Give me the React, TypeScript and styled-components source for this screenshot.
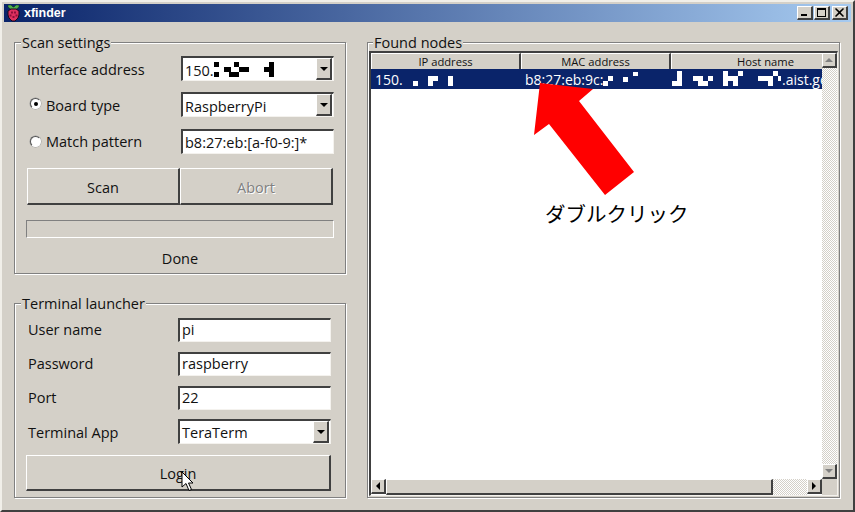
import React from "react";
import styled, { createGlobalStyle, css } from "styled-components";

const FACE = "#d4d0c8";
const FONT = `"Open Sans", "Noto Sans", sans-serif`;

const GlobalStyle = createGlobalStyle`
  html, body {
    margin: 0;
    padding: 0;
    background: ${FACE};
  }
  * {
    box-sizing: border-box;
  }
`;

const raised = css`
  background: ${FACE};
  border-style: solid;
  border-width: 1px 2px 2px 1px;
  border-color: #fff #404040 #404040 #fff;
`;

const sunken = css`
  border-style: solid;
  border-width: 2px 1px 1px 2px;
  border-color: #404040 #f4f2ee #f4f2ee #404040;
`;

// moves a text up or down inside its centred row
const nudge = css<{ $dy?: number }>`
  padding-top: ${(p) => Math.max((p.$dy ?? 0) * 2, 0)}px;
  padding-bottom: ${(p) => Math.max(-(p.$dy ?? 0) * 2, 0)}px;
`;

const Window = styled.div`
  position: relative;
  width: 855px;
  height: 512px;
  overflow: hidden;
  display: flex;
  flex-direction: column;
  padding: 2px 2px;
  background: ${FACE};
  border-style: solid;
  border-width: 2px;
  border-color: #f1efe9 #404040 #404040 #f1efe9;
  font-family: ${FONT};
  font-size: 14.5px;
  color: #111;
`;

const TitleBar = styled.div`
  height: 18px;
  flex: none;
  display: flex;
  align-items: center;
  padding: 0 3px 0 3px;
  background: linear-gradient(90deg, #0a246a, #a6caf0);
`;

const TitleText = styled.span`
  margin-left: 4px;
  font-family: "Liberation Sans", sans-serif;
  font-size: 12.5px;
  font-weight: bold;
  color: #fff;
`;

const TitleButtons = styled.div`
  margin-left: auto;
  display: flex;
  gap: 1px;
`;

const TitleButton = styled.div<{ $gap?: boolean }>`
  ${raised}
  width: 16px;
  height: 14px;
  margin-left: ${(p) => (p.$gap ? "1px" : "0")};
  display: flex;
  align-items: center;
  justify-content: center;
`;

const Content = styled.div`
  flex: 1;
  display: flex;
  gap: 21px;
  padding: 20px 11px 10px 10px;
`;

const LeftColumn = styled.div`
  width: 332px;
  flex: none;
  display: flex;
  flex-direction: column;
  gap: 29px;
`;

const GroupBox = styled.div<{ $height?: number }>`
  position: relative;
  flex: ${(p) => (p.$height ? "none" : "1")};
  height: ${(p) => (p.$height ? `${p.$height}px` : "auto")};
  display: flex;
  flex-direction: column;
  border: 1px solid #808080;
  box-shadow: inset 1px 1px 0 #fff, 1px 1px 0 #fff;
`;

const GroupTitle = styled.div<{ $left?: number }>`
  position: absolute;
  top: -9px;
  left: ${(p) => p.$left ?? 6}px;
  padding: 0 1px;
  line-height: 17px;
  background: ${FACE};
`;

const FormRow = styled.div<{ $h: number; $mt: number; $pl: number; $pr: number }>`
  height: ${(p) => p.$h}px;
  margin-top: ${(p) => p.$mt}px;
  padding: 0 ${(p) => p.$pr}px 0 ${(p) => p.$pl}px;
  display: flex;
  align-items: center;
  flex: none;
`;

const FieldLabel = styled.span<{ $dy?: number }>`
  ${nudge}
  flex: 1;
  white-space: nowrap;
`;

const RadioLabel = styled(FieldLabel)`
  display: flex;
  align-items: center;
  gap: 5px;
`;

const Radio = styled.span<{ $on?: boolean; $up?: number }>`
  width: 11px;
  height: 11px;
  flex: none;
  margin-bottom: ${(p) => p.$up ?? 0}px;
  display: flex;
  align-items: center;
  justify-content: center;
  border-radius: 50%;
  border: 1px solid;
  border-color: #555 #fff #fff #555;
  background: #fff;
  box-shadow: 0 0 0 0.5px #999;
  &::after {
    content: "";
    width: 4px;
    height: 4px;
    border-radius: 50%;
    background: ${(p) => (p.$on ? "#000" : "transparent")};
  }
`;

const Field = styled.div`
  ${sunken}
  width: 153px;
  height: 100%;
  flex: none;
  display: flex;
  align-items: center;
  padding-left: 2px;
  background: #fff;
  white-space: nowrap;
  overflow: hidden;
`;

const FieldValue = styled.span<{ $dy?: number }>`
  ${nudge}
  flex: 1;
  display: flex;
  align-items: center;
`;

const ComboButton = styled.span`
  ${raised}
  width: 16px;
  height: 100%;
  flex: none;
  margin-right: 1px;
  display: flex;
  align-items: center;
  justify-content: center;
`;

const DownArrow = styled.span<{ $muted?: boolean }>`
  width: 0;
  height: 0;
  border-left: 4px solid transparent;
  border-right: 4px solid transparent;
  border-top: 4px solid ${(p) => (p.$muted ? "#808080" : "#000")};
`;

const UpArrow = styled.span`
  width: 0;
  height: 0;
  border-left: 4px solid transparent;
  border-right: 4px solid transparent;
  border-bottom: 4px solid #808080;
`;

const LeftArrow = styled.span`
  width: 0;
  height: 0;
  border-top: 4px solid transparent;
  border-bottom: 4px solid transparent;
  border-right: 4px solid #000;
`;

const RightArrow = styled.span`
  width: 0;
  height: 0;
  border-top: 4px solid transparent;
  border-bottom: 4px solid transparent;
  border-left: 4px solid #000;
`;

const ButtonRow = styled.div`
  height: 37px;
  margin: 14px 12px 0 12px;
  display: flex;
  flex: none;
`;

const PushButton = styled.div<{ $disabled?: boolean }>`
  ${raised}
  flex: 1;
  display: flex;
  align-items: center;
  justify-content: center;
  padding-top: 2px;
  color: ${(p) => (p.$disabled ? "#808080" : "#111")};
  text-shadow: ${(p) => (p.$disabled ? "1px 1px 0 #fff" : "none")};
`;

const WideButton = styled(PushButton)`
  flex: none;
  height: 36px;
  margin: 11px 14px 0 11px;
`;

const Progress = styled.div`
  height: 18px;
  margin: 15px 11px 0 11px;
  flex: none;
  border: 1px solid;
  border-color: #808080 #fff #fff #808080;
`;

const Status = styled.div`
  margin-top: 11px;
  text-align: center;
  line-height: 20px;
`;

const RightPanel = styled(GroupBox)`
  flex: 1;
`;

const ListFrame = styled.div`
  ${sunken}
  flex: 1;
  margin: 8px 1px 1px 1px;
  display: grid;
  grid-template-columns: 1fr 15px;
  grid-template-rows: 1fr 16px;
  min-height: 0;
  background: #fff;
`;

const ListPane = styled.div`
  display: flex;
  flex-direction: column;
  overflow: hidden;
  min-width: 0;
`;

// the last column runs on under the scroll bar, as the list is wider than its pane
const HeaderRow = styled.div`
  display: grid;
  grid-template-columns: 150px 150px 190px;
  height: 16px;
  flex: none;
`;

const HeaderCell = styled.div`
  ${raised}
  display: flex;
  align-items: center;
  justify-content: center;
  font-size: 11.2px;
  white-space: nowrap;
`;

const NodeRow = styled.div`
  display: grid;
  grid-template-columns: 150px 150px 190px;
  height: 20px;
  flex: none;
  background: #0a246a;
  color: #fff;
  font-size: 14px;
`;

const NodeCell = styled.div<{ $pl: number }>`
  display: flex;
  align-items: center;
  padding-left: ${(p) => p.$pl}px;
  white-space: nowrap;
  overflow: hidden;
`;

const VScroll = styled.div`
  display: flex;
  flex-direction: column;
`;

const ScrollButton = styled.div`
  ${raised}
  width: 15px;
  height: 15px;
  flex: none;
  display: flex;
  align-items: center;
  justify-content: center;
`;

const ScrollTrack = styled.div`
  flex: 1;
  background: repeating-conic-gradient(#fff 0 25%, ${FACE} 0 50%) 0 0 / 2px 2px;
`;

const HScroll = styled.div`
  display: flex;
`;

const ScrollThumb = styled.div`
  ${raised}
  flex: none;
  width: 387px;
`;

const ScrollCorner = styled.div`
  background: ${FACE};
`;

const ArrowOverlay = styled.svg`
  position: absolute;
  left: 0;
  top: 0;
  pointer-events: none;
`;

const Annotation = styled.div`
  position: absolute;
  left: 543px;
  top: 196px;
  font-family: "Noto Sans CJK JP", sans-serif;
  font-size: 20.5px;
  line-height: 30px;
  color: #000;
  white-space: nowrap;
`;

const Cursor = styled.svg`
  position: absolute;
  left: 179px;
  top: 469px;
`;

const Redact = ({ w, h, color, cells }: { w: number; h: number; color: string; cells: number[][] }) => (
  <svg width={w} height={h} viewBox={`0 0 ${w} ${h}`} style={{ flex: "none" }}>
    {cells.map(([x, y, cw, ch], i) => (
      <rect key={i} x={x} y={y} width={cw} height={ch} fill={color} />
    ))}
  </svg>
);

const RaspberryIcon = () => (
  <svg width="13" height="17" viewBox="0 0 13 17">
    <path d="M1 0h3l2 2h1l2-2h3v2l-3 2.5H4L1 2z" fill="#4fb04a" stroke="#0b2a12" strokeWidth="0.5" />
    <path
      d="M4 4h5l3 2v4l-1 3-3 3H5l-3-3-1-3V6z"
      fill="#e0305f"
      stroke="#1a0a1a"
      strokeWidth="1"
    />
    <path d="M4 6.5h2v2H4zM7 6.5h2v2H7zM2.5 9.5h2v2h-2zM8.5 9.5h2v2h-2zM5.5 11h2v2h-2z" fill="#8f0f3a" />
  </svg>
);

const MinimizeGlyph = () => (
  <svg width="10" height="9" viewBox="0 0 10 9">
    <rect x="1" y="6" width="6" height="2" fill="#000" />
  </svg>
);

const MaximizeGlyph = () => (
  <svg width="10" height="9" viewBox="0 0 10 9">
    <path d="M0 0h9v9H0zM1 2v6h7V2z" fillRule="evenodd" fill="#000" />
  </svg>
);

const CloseGlyph = () => (
  <svg width="10" height="9" viewBox="0 0 10 9">
    <path d="M1 0l3.5 3.2L8 0l1 1-3.4 3.5L9 8 8 9 4.5 5.7 1 9 0 8l3.4-3.5L0 1z" fill="#000" />
  </svg>
);

export default function App() {
  return (
    <>
      <GlobalStyle />
      <Window>
        <TitleBar>
          <RaspberryIcon />
          <TitleText>xfinder</TitleText>
          <TitleButtons>
            <TitleButton>
              <MinimizeGlyph />
            </TitleButton>
            <TitleButton>
              <MaximizeGlyph />
            </TitleButton>
            <TitleButton $gap>
              <CloseGlyph />
            </TitleButton>
          </TitleButtons>
        </TitleBar>

        <Content>
          <LeftColumn>
            <GroupBox $height={232}>
              <GroupTitle>Scan settings</GroupTitle>
              <FormRow $h={25} $mt={13} $pl={12} $pr={11}>
                <FieldLabel $dy={1}>Interface address</FieldLabel>
                <Field>
                  <FieldValue $dy={1}>
                    150.
                    <Redact
                      w={62}
                      h={16}
                      color="#000"
                      cells={[
                        [0, 0, 5, 5],
                        [0, 10, 5, 5],
                        [10, 5, 7, 5],
                        [20, 0, 5, 5],
                        [25, 5, 10, 5],
                        [15, 10, 10, 5],
                        [50, 5, 5, 5],
                        [55, 0, 5, 15],
                      ]}
                    />
                  </FieldValue>
                  <ComboButton>
                    <DownArrow />
                  </ComboButton>
                </Field>
              </FormRow>
              <FormRow $h={25} $mt={11} $pl={15} $pr={11}>
                <RadioLabel $dy={1}>
                  <Radio $on $up={4} />
                  Board type
                </RadioLabel>
                <Field>
                  <FieldValue $dy={1}>RaspberryPi</FieldValue>
                  <ComboButton>
                    <DownArrow />
                  </ComboButton>
                </Field>
              </FormRow>
              <FormRow $h={25} $mt={12} $pl={15} $pr={11}>
                <RadioLabel>
                  <Radio />
                  Match pattern
                </RadioLabel>
                <Field>
                  <FieldValue>b8:27:eb:[a-f0-9:]*</FieldValue>
                </Field>
              </FormRow>
              <ButtonRow>
                <PushButton>Scan</PushButton>
                <PushButton $disabled>Abort</PushButton>
              </ButtonRow>
              <Progress />
              <Status>Done</Status>
            </GroupBox>

            <GroupBox>
              <GroupTitle>Terminal launcher</GroupTitle>
              <FormRow $h={24} $mt={14} $pl={13} $pr={14}>
                <FieldLabel $dy={-1}>User name</FieldLabel>
                <Field>
                  <FieldValue $dy={-1}>pi</FieldValue>
                </Field>
              </FormRow>
              <FormRow $h={24} $mt={10} $pl={13} $pr={14}>
                <FieldLabel $dy={-1}>Password</FieldLabel>
                <Field>
                  <FieldValue $dy={-1}>raspberry</FieldValue>
                </Field>
              </FormRow>
              <FormRow $h={24} $mt={10} $pl={13} $pr={14}>
                <FieldLabel $dy={-1}>Port</FieldLabel>
                <Field>
                  <FieldValue $dy={-1}>22</FieldValue>
                </Field>
              </FormRow>
              <FormRow $h={25} $mt={9} $pl={13} $pr={14}>
                <FieldLabel $dy={1}>Terminal App</FieldLabel>
                <Field>
                  <FieldValue>TeraTerm</FieldValue>
                  <ComboButton>
                    <DownArrow />
                  </ComboButton>
                </Field>
              </FormRow>
              <WideButton>Login</WideButton>
            </GroupBox>
          </LeftColumn>

          <RightPanel>
            <GroupTitle $left={5}>Found nodes</GroupTitle>
            <ListFrame>
              <ListPane>
                <HeaderRow>
                  <HeaderCell>IP address</HeaderCell>
                  <HeaderCell>MAC address</HeaderCell>
                  <HeaderCell>Host name</HeaderCell>
                </HeaderRow>
                <NodeRow>
                  <NodeCell $pl={4}>
                    150.
                    <Redact
                      w={50}
                      h={20}
                      color="#fff"
                      cells={[
                        [10, 12, 5, 5],
                        [25, 7, 10, 5],
                        [25, 12, 5, 5],
                        [45, 7, 5, 10],
                      ]}
                    />
                  </NodeCell>
                  <NodeCell $pl={4}>
                    b8:27:eb:9c:
                    <Redact
                      w={40}
                      h={20}
                      color="#fff"
                      cells={[
                        [5, 7, 5, 5],
                        [0, 12, 5, 5],
                        [20, 8, 5, 5],
                        [30, 3, 5, 4],
                      ]}
                    />
                  </NodeCell>
                  <NodeCell $pl={1}>
                    <Redact
                      w={110}
                      h={20}
                      color="#fff"
                      cells={[
                        [5, 2, 5, 15],
                        [0, 12, 5, 5],
                        [21, 7, 10, 5],
                        [26, 12, 10, 5],
                        [36, 7, 5, 5],
                        [51, 2, 5, 15],
                        [56, 7, 10, 5],
                        [61, 12, 5, 5],
                        [66, 2, 5, 5],
                        [86, 7, 15, 5],
                        [96, 12, 5, 5],
                        [101, 2, 5, 5],
                        [106, 7, 3, 5],
                      ]}
                    />
                    .aist.go.jp
                  </NodeCell>
                </NodeRow>
              </ListPane>
              <VScroll>
                <ScrollButton>
                  <UpArrow />
                </ScrollButton>
                <ScrollTrack />
                <ScrollButton>
                  <DownArrow $muted />
                </ScrollButton>
              </VScroll>
              <HScroll>
                <ScrollButton>
                  <LeftArrow />
                </ScrollButton>
                <ScrollThumb />
                <ScrollTrack />
                <ScrollButton>
                  <RightArrow />
                </ScrollButton>
              </HScroll>
              <ScrollCorner />
            </ListFrame>
          </RightPanel>
        </Content>

        <ArrowOverlay width="851" height="508" viewBox="2 2 851 508">
          <polygon
            points="540,83 593,89 579,101 634,172 605,195 549,124 534,135"
            fill="#ff0000"
          />
        </ArrowOverlay>
        <Annotation>ダブルクリック</Annotation>
        <Cursor width="14" height="22" viewBox="0 0 14 22">
          <path
            d="M1 1v15l4-3.5 3 7 2.5-1-3-6.5H12z"
            fill="#fff"
            stroke="#000"
            strokeWidth="1"
          />
        </Cursor>
      </Window>
    </>
  );
}
